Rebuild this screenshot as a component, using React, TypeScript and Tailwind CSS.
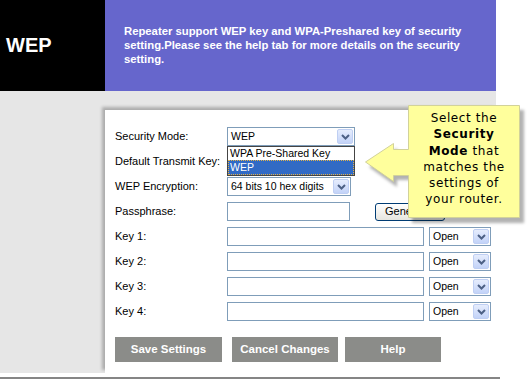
const Chevron = () => (
  <svg width="9" height="6" viewBox="0 0 9 6">
    <path d="M1 1 L4.5 4.5 L8 1" fill="none" stroke="#4d6185" strokeWidth="2" />
  </svg>
);

function Select({ value, w }: { value: string; w: string }) {
  return (
    <div className={`flex h-[19px] items-center border border-[#7f9db9] bg-white pl-[3px] pr-[1px] ${w}`}>
      <span className="flex-1 text-[10.5px] leading-none text-black">{value}</span>
      <span className="flex h-[15px] w-[16px] items-center justify-center rounded-[2px] border border-[#bfcff3] bg-gradient-to-b from-[#e6edfd] to-[#c3d3f8]">
        <Chevron />
      </span>
    </div>
  );
}

const Input = ({ w }: { w: string }) => (
  <div className={`h-[19px] border border-[#7f9db9] bg-white ${w}`} />
);

function Row({ label, children }: { label: string; children?: React.ReactNode }) {
  return (
    <div className="flex h-[19px] items-center">
      <span className="w-[112px] text-[11px] leading-none text-black">{label}</span>
      {children}
    </div>
  );
}

export default function App() {
  const keys = ["Key 1:", "Key 2:", "Key 3:", "Key 4:"];

  return (
    <div className="relative h-[380px] w-[527px] overflow-hidden bg-white font-['Liberation_Sans',Arial,sans-serif]">
      {/* header */}
      <div className="flex h-[91px] w-[496px]">
        <div className="flex w-[105px] items-center bg-black pb-[2px] pl-[6px]">
          <span className="text-[20px] font-bold text-white">WEP</span>
        </div>
        <div className="flex-1 whitespace-nowrap bg-[#6666cc] pl-[19px] pt-[24px] text-[11.3px] font-bold leading-[14px] text-white">
          Repeater support WEP key and WPA-Preshared key of security
          <br />
          setting.Please see the help tab for more details on the security
          <br />
          setting.
        </div>
      </div>

      {/* body */}
      <div className="h-[282px] w-[496px] bg-[#e6e6e6] pl-[105px] pt-[19px]">
        <div className="flex h-full flex-col gap-[6px] bg-white pl-[10px] pt-[17px] shadow-[-3px_-3px_3px_rgba(0,0,0,0.25)]">
          <Row label="Security Mode:">
            <div className="relative">
              <Select value="WEP" w="w-[128px]" />
              <div className="absolute left-0 top-full z-10 w-[128px] border border-[#444] bg-white text-[10.5px] leading-[13px]">
                <div className="pl-[2px] text-black">WPA Pre-Shared Key</div>
                <div className="border border-dotted border-[#e3b34a] bg-[#316ac5] pl-[1px] text-white">WEP</div>
              </div>
            </div>
          </Row>
          <Row label="Default Transmit Key:">
            <Select value="" w="w-[60px]" />
          </Row>
          <Row label="WEP Encryption:">
            <Select value="64 bits 10 hex digits" w="w-[124px]" />
          </Row>
          <Row label="Passphrase:">
            <Input w="w-[123px]" />
            <button className="ml-[25px] h-[18px] w-[70px] rounded-[3px] border border-[#003c74] bg-gradient-to-b from-white to-[#e6e5df] pl-[9px] text-left text-[11px] leading-none text-black">
              Generate
            </button>
          </Row>
          {keys.map((k) => (
            <Row key={k} label={k}>
              <Input w="w-[197px]" />
              <div className="ml-[5px]">
                <Select value="Open" w="w-[62px]" />
              </div>
            </Row>
          ))}
          <div className="mt-[10px] flex h-[25px] text-[11.5px] font-bold text-white">
            <button className="w-[107px] bg-[#8b8c89]">Save Settings</button>
            <button className="ml-[10px] w-[106px] bg-[#8b8c89]">Cancel Changes</button>
            <button className="ml-[7px] w-[96px] bg-[#8b8c89]">Help</button>
          </div>
        </div>
      </div>
      <div className="mt-[4px] h-[2px] w-[500px] bg-[#858585]" />

      {/* callout */}
      <svg className="absolute left-[360px] top-[100px]" width="170" height="130" viewBox="360 100 170 130">
        <defs>
          <filter id="blur" x="-10%" y="-10%" width="130%" height="130%">
            <feGaussianBlur stdDeviation="1.5" />
          </filter>
        </defs>
        <path
          d="M408 105 H520 V218 H408 V175 H393 V182 L365 162 L393 143 V150 H408 Z"
          transform="translate(4 5)"
          fill="rgba(0,0,0,0.3)"
          filter="url(#blur)"
        />
        <path
          d="M408.5 105.5 H519.5 V217.5 H408.5 V175.5 H393.5 V181.5 L365.5 162 L393.5 143.5 V149.5 H408.5 Z"
          fill="#ffff9c"
          stroke="#d2d29a"
        />
      </svg>
      <div className="absolute left-[408px] top-[105px] w-[112px] pt-[5px] text-center font-['DejaVu_Sans',Verdana,sans-serif] text-[12px] leading-[16.3px] tracking-[0.6px] text-black">
        Select the
        <br />
        <b>Security</b>
        <br />
        <b>Mode</b> that
        <br />
        matches the
        <br />
        settings of
        <br />
        your router.
      </div>
    </div>
  );
}
